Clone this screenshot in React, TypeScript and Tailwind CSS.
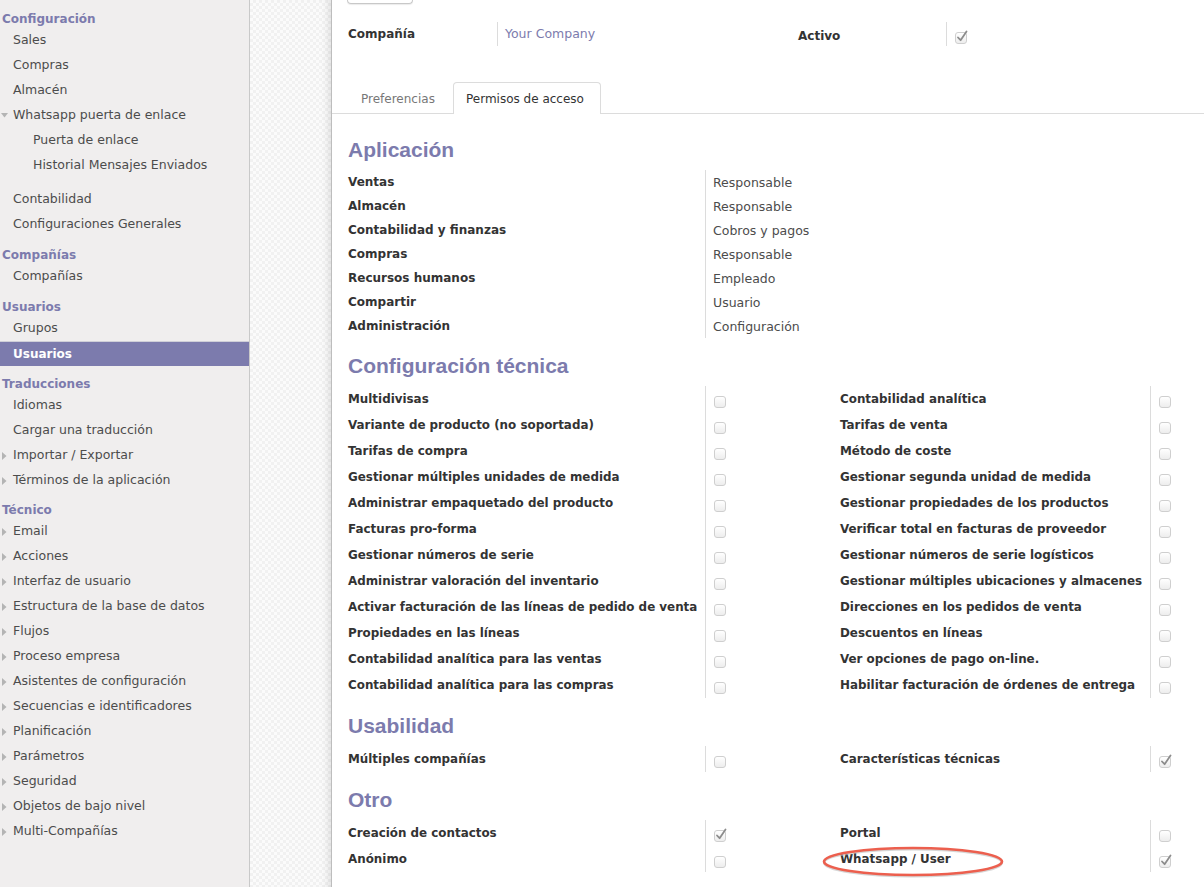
import React from 'react';

type MenuItem = { label: string; arrow?: 'right' | 'down'; active?: boolean; children?: string[] };
type MenuSection = { title: string; items: MenuItem[] };

const menu: MenuSection[] = [
	{
		title: 'Configuración',
		items: [
			{ label: 'Sales' },
			{ label: 'Compras' },
			{ label: 'Almacén' },
			{ label: 'Whatsapp puerta de enlace', arrow: 'down', children: ['Puerta de enlace', 'Historial Mensajes Enviados'] },
			{ label: 'Contabilidad' },
			{ label: 'Configuraciones Generales' },
		],
	},
	{ title: 'Compañías', items: [{ label: 'Compañías' }] },
	{ title: 'Usuarios', items: [{ label: 'Grupos' }, { label: 'Usuarios', active: true }] },
	{
		title: 'Traducciones',
		items: [
			{ label: 'Idiomas' },
			{ label: 'Cargar una traducción' },
			{ label: 'Importar / Exportar', arrow: 'right' },
			{ label: 'Términos de la aplicación', arrow: 'right' },
		],
	},
	{
		title: 'Técnico',
		items: [
			'Email',
			'Acciones',
			'Interfaz de usuario',
			'Estructura de la base de datos',
			'Flujos',
			'Proceso empresa',
			'Asistentes de configuración',
			'Secuencias e identificadores',
			'Planificación',
			'Parámetros',
			'Seguridad',
			'Objetos de bajo nivel',
			'Multi-Compañías',
		].map((label) => ({ label, arrow: 'right' as const })),
	},
];

const aplicacion = [
	['Ventas', 'Responsable'],
	['Almacén', 'Responsable'],
	['Contabilidad y finanzas', 'Cobros y pagos'],
	['Compras', 'Responsable'],
	['Recursos humanos', 'Empleado'],
	['Compartir', 'Usuario'],
	['Administración', 'Configuración'],
];

type Pair = { left: string; leftOn?: boolean; right: string; rightOn?: boolean; mark?: boolean };

const tecnica: Pair[] = [
	{ left: 'Multidivisas', right: 'Contabilidad analítica' },
	{ left: 'Variante de producto (no soportada)', right: 'Tarifas de venta' },
	{ left: 'Tarifas de compra', right: 'Método de coste' },
	{ left: 'Gestionar múltiples unidades de medida', right: 'Gestionar segunda unidad de medida' },
	{ left: 'Administrar empaquetado del producto', right: 'Gestionar propiedades de los productos' },
	{ left: 'Facturas pro-forma', right: 'Verificar total en facturas de proveedor' },
	{ left: 'Gestionar números de serie', right: 'Gestionar números de serie logísticos' },
	{ left: 'Administrar valoración del inventario', right: 'Gestionar múltiples ubicaciones y almacenes' },
	{ left: 'Activar facturación de las líneas de pedido de venta', right: 'Direcciones en los pedidos de venta' },
	{ left: 'Propiedades en las líneas', right: 'Descuentos en líneas' },
	{ left: 'Contabilidad analítica para las ventas', right: 'Ver opciones de pago on-line.' },
	{ left: 'Contabilidad analítica para las compras', right: 'Habilitar facturación de órdenes de entrega' },
];

const usabilidad: Pair[] = [{ left: 'Múltiples compañías', right: 'Características técnicas', rightOn: true }];

const otro: Pair[] = [
	{ left: 'Creación de contactos', leftOn: true, right: 'Portal' },
	{ left: 'Anónimo', right: 'Whatsapp / User', rightOn: true, mark: true },
];

const font = 'font-["DejaVu_Sans",sans-serif]';

function Arrow({ dir }: { dir: 'right' | 'down' }) {
	if (dir === 'down') {
		return (
			<svg width="7" height="5" viewBox="0 0 7 5" className="ml-[1px]">
				<path d="M0 0 L7 0 L3.5 4.5 Z" fill="#b4b4b4" />
			</svg>
		);
	}
	return (
		<svg width="5" height="8" viewBox="0 0 5 8" className="ml-[2px]">
			<path d="M0 0 L4.5 4 L0 8 Z" fill="#b4b4b4" />
		</svg>
	);
}

function Checkbox({ on }: { on?: boolean }) {
	return (
		<span className="relative block w-[12px] h-[12px] rounded-[3px] border border-[#cfcfcf] bg-linear-to-b from-white to-[#ededed]">
			{on && (
				<svg width="14" height="14" viewBox="0 0 14 14" className="absolute left-[-1px] top-[-4px]">
					<path d="M3 8.5 L5.6 11.2 L11.5 2.5" fill="none" stroke="#8c8c8c" strokeWidth="1.8" strokeLinecap="round" strokeLinejoin="round" />
				</svg>
			)}
		</span>
	);
}

function Sidebar() {
	return (
		<div className={`w-[250px] shrink-0 h-full bg-[#f0eeee] border-r border-[#c9c9c9] ${font}`}>
			{menu.map((section, si) => (
				<div key={section.title}>
					<div
						className={`${si === 0 ? 'mt-[11px]' : si === 4 ? 'mt-[9px]' : 'mt-[10px]'} h-[17px] leading-[17px] pl-[2px] text-[12px] font-bold text-[#7c7bad]`}
					>
						{section.title}
					</div>
					{section.items.map((item) => (
						<div key={item.label}>
							<div
								className={`flex items-center h-[25px] ${
									item.active ? 'bg-[#7c7bad] text-white font-bold border-t border-[#cfcfd8] text-[12px]' : 'text-[#4c4c4c] text-[12.5px]'
								}`}
							>
								<span className="w-[13px] flex items-center">{item.arrow && <Arrow dir={item.arrow} />}</span>
								<span>{item.label}</span>
							</div>
							{item.children && (
								<div className="mb-[9px]">
									{item.children.map((c) => (
										<div key={c} className="h-[25px] flex items-center pl-[33px] text-[12.5px] text-[#4c4c4c]">
											{c}
										</div>
									))}
								</div>
							)}
						</div>
					))}
				</div>
			))}
		</div>
	);
}

function SectionTitle({ children, first }: { children: React.ReactNode; first?: boolean }) {
	return (
		<div className={`${first ? 'mt-[22px]' : 'mt-[14px]'} h-[28px] leading-[28px] text-[21px] font-bold text-[#7c7bad] font-["Liberation_Sans",Arial,sans-serif]`}>
			{children}
		</div>
	);
}

function PairGrid({ rows }: { rows: Pair[] }) {
	const labelCls = 'h-[26px] flex items-center pt-[1px] text-[11.9px] font-bold text-[#333]';
	const boxCls = 'h-[26px] pt-[10px]';
	return (
		<div className="mt-[6px] flex">
			<div className="w-[357px]">
				{rows.map((r) => (
					<div key={r.left} className={labelCls}>
						{r.left}
					</div>
				))}
			</div>
			<div className="w-[135px] border-l border-[#dcdcdc] pl-[8px]">
				{rows.map((r) => (
					<div key={r.left} className={boxCls}>
						<Checkbox on={r.leftOn} />
					</div>
				))}
			</div>
			<div className="w-[310px]">
				{rows.map((r) => (
					<div key={r.right} className={`${labelCls} relative`}>
						{r.right}
						{r.mark && (
							<svg width="184" height="32" viewBox="0 0 184 32" className="absolute left-[-19px] top-[0px] overflow-visible">
								<ellipse cx="92" cy="17" rx="89" ry="13.5" fill="none" stroke="#bbb" strokeWidth="2" opacity="0.6" />
								<ellipse cx="92" cy="15.5" rx="89" ry="13.5" fill="none" stroke="#ec5f4e" strokeWidth="2.6" />
							</svg>
						)}
					</div>
				))}
			</div>
			<div className="flex-1 border-l border-[#dcdcdc] pl-[8px]">
				{rows.map((r) => (
					<div key={r.right} className={boxCls}>
						<Checkbox on={r.rightOn} />
					</div>
				))}
			</div>
		</div>
	);
}

export default function App() {
	return (
		<div className={`flex h-[887px] overflow-hidden bg-white ${font}`}>
			<Sidebar />
			<div className="w-[82px] shrink-0 h-full bg-[repeating-conic-gradient(#f1f1f1_0_25%,#fbfbfb_0_50%)] bg-[length:6px_6px] border-r border-[#bdbdbd] shadow-[inset_-8px_0_8px_-6px_rgba(0,0,0,0.12)]" />
			<div className="flex-1 h-full">
				<div className="ml-[15px] w-[66px] h-[4px] border border-t-0 border-[#c8c8c8] rounded-b-[4px] shadow-[0_1px_1px_rgba(0,0,0,0.08)]" />

				{/* company row */}
				<div className="mt-[18px] pl-[16px] flex h-[24px]">
					<div className="w-[149px] flex items-center text-[12px] font-bold text-[#333]">Compañía</div>
					<div className="w-[301px] border-l border-[#dcdcdc] pl-[7px] flex items-center text-[12.5px] text-[#7c7bad]">Your Company</div>
					<div className="w-[148px] flex items-center pt-[3px] text-[12px] font-bold text-[#333]">Activo</div>
					<div className="border-l border-[#dcdcdc] pl-[8px] pt-[10px]">
						<Checkbox on />
					</div>
				</div>

				{/* tabs */}
				<div className="mt-[36px] h-[32px] pl-[16px] flex items-end border-b border-[#dcdcdc]">
					<div className="w-[105px] h-[31px] flex items-center pl-[13px] pt-[2px] text-[12px] text-[#777]">Preferencias</div>
					<div className="w-[148px] h-[32px] mb-[-1px] flex items-center pl-[12px] text-[12px] text-[#333] bg-white border border-b-0 border-[#dcdcdc] rounded-t-[4px]">
						Permisos de acceso
					</div>
				</div>

				<div className="pl-[16px]">
					<SectionTitle first>Aplicación</SectionTitle>
					<div className="mt-[6px] flex">
						<div className="w-[357px]">
							{aplicacion.map(([l]) => (
								<div key={l} className="h-[24px] flex items-center text-[12px] font-bold text-[#333]">
									{l}
								</div>
							))}
						</div>
						<div className="border-l border-[#dcdcdc] pl-[7px]">
							{aplicacion.map(([l, v]) => (
								<div key={l} className="h-[24px] flex items-center pt-[2px] text-[12.5px] text-[#4c4c4c]">
									{v}
								</div>
							))}
						</div>
					</div>

					<SectionTitle>Configuración técnica</SectionTitle>
					<PairGrid rows={tecnica} />

					<SectionTitle>Usabilidad</SectionTitle>
					<PairGrid rows={usabilidad} />

					<SectionTitle>Otro</SectionTitle>
					<PairGrid rows={otro} />
				</div>
			</div>
		</div>
	);
}
